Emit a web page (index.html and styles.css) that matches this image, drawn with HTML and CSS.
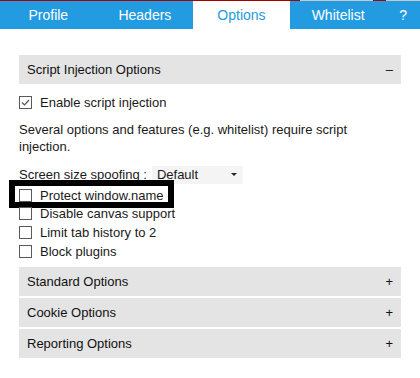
FILE: index.html
```html
<!DOCTYPE html>
<html lang="en">
<head>
    <meta charset="UTF-8">
    <meta name="viewport" content="width=device-width, initial-scale=1.0">
    <title>Options</title>
    <link rel="stylesheet" href="styles.css">
</head>
<body>
    <!-- window frame strip -->
    <div class="frame-strip">
        <span class="strip-red wide"></span>
        <span class="strip-grey mid"></span>
        <span class="strip-red small"></span>
        <span class="strip-grey rest"></span>
    </div>

    <!-- Tabs -->
    <nav class="tabs">
        <div class="tab">Profile</div>
        <div class="tab">Headers</div>
        <div class="tab active">Options</div>
        <div class="tab">Whitelist</div>
        <div class="tab help">?</div>
    </nav>

    <div class="content">
        <!-- Script injection section (open) -->
        <div class="section">
            <div class="section-head">
                <span>Script Injection Options</span>
                <span class="toggle">&ndash;</span>
            </div>
            <div class="section-body">
                <div class="check-row">
                    <span class="box">
                        <svg width="11" height="11" viewBox="0 0 11 11">
                            <path d="M2 5.5 L4.5 8 L9 3" fill="none" stroke="#555" stroke-width="1.2"/>
                        </svg>
                    </span>
                    <span>Enable script injection</span>
                </div>

                <p class="note">Several options and features (e.g. whitelist) require script injection.</p>

                <div class="select-row">
                    <span>Screen size spoofing :</span>
                    <div class="fake-select">
                        <span>Default</span>
                        <span class="arrow"></span>
                    </div>
                </div>

                <div class="check-row marked">
                    <span class="box"></span>
                    <span>Protect window.name</span>
                    <div class="highlight"></div>
                </div>
                <div class="check-row">
                    <span class="box"></span>
                    <span>Disable canvas support</span>
                </div>
                <div class="check-row">
                    <span class="box"></span>
                    <span>Limit tab history to 2</span>
                </div>
                <div class="check-row">
                    <span class="box"></span>
                    <span>Block plugins</span>
                </div>
            </div>
        </div>

        <!-- Collapsed sections -->
        <div class="section-head collapsed">
            <span>Standard Options</span>
            <span class="toggle">+</span>
        </div>
        <div class="section-head collapsed">
            <span>Cookie Options</span>
            <span class="toggle">+</span>
        </div>
        <div class="section-head collapsed">
            <span>Reporting Options</span>
            <span class="toggle">+</span>
        </div>
    </div>
</body>
</html>
```

FILE: styles.css
```css
body {
    margin: 0;
    font-family: "Liberation Sans", Arial, sans-serif;
    font-size: 13px;
    color: #1a1a1a;
    background: #fff;
}

.frame-strip {
    display: flex;
    height: 1px;
}
.strip-red {
    background: #a40000;
}
.strip-grey {
    background: #c9c9c9;
}
.wide { width: 300px; }
.mid { width: 73px; }
.small { width: 13px; }
.rest { flex: 1; }

.tabs {
    display: flex;
    height: 28px;
    background: #239be0;
    font-size: 14px;
}
.tab {
    width: 23%;
    line-height: 28px;
    text-align: center;
    color: #fff;
}
.tab.active {
    background: #fff;
    color: #239be0;
}
.tab.help {
    width: 8%;
}

.content {
    padding: 26px 19px 0;
}

.section-head {
    display: flex;
    justify-content: space-between;
    height: 29px;
    line-height: 29px;
    padding: 0 8px 0 8px;
    background: #e4e4e4;
    color: #111;
}
.collapsed {
    margin-top: 2px;
}
.section-body {
    padding-top: 9px;
    padding-bottom: 5px;
}

.check-row {
    display: flex;
    align-items: center;
    gap: 8px;
    height: 18.7px;
    position: relative;
}
.box {
    display: inline-flex;
    align-items: center;
    justify-content: center;
    width: 11px;
    height: 11px;
    border: 1px solid #5a5a5a;
    background: #fff;
}

.note {
    margin: 9px 0 11px;
    line-height: 17px;
}

.select-row {
    display: flex;
    align-items: center;
    gap: 5px;
    height: 18px;
    margin-bottom: 2px;
}
.fake-select {
    display: flex;
    justify-content: space-between;
    align-items: center;
    width: 91px;
    height: 18px;
    padding: 0 6px 0 5px;
    box-sizing: border-box;
    background: #f4f4f4;
}
.arrow {
    width: 0;
    height: 0;
    border-left: 3px solid transparent;
    border-right: 3px solid transparent;
    border-top: 3px solid #222;
}

/* annotation box drawn over the row */
.highlight {
    position: absolute;
    left: -10px;
    top: -6px;
    width: 165px;
    height: 28px;
    border: 6px solid #000;
    box-sizing: border-box;
}
```
